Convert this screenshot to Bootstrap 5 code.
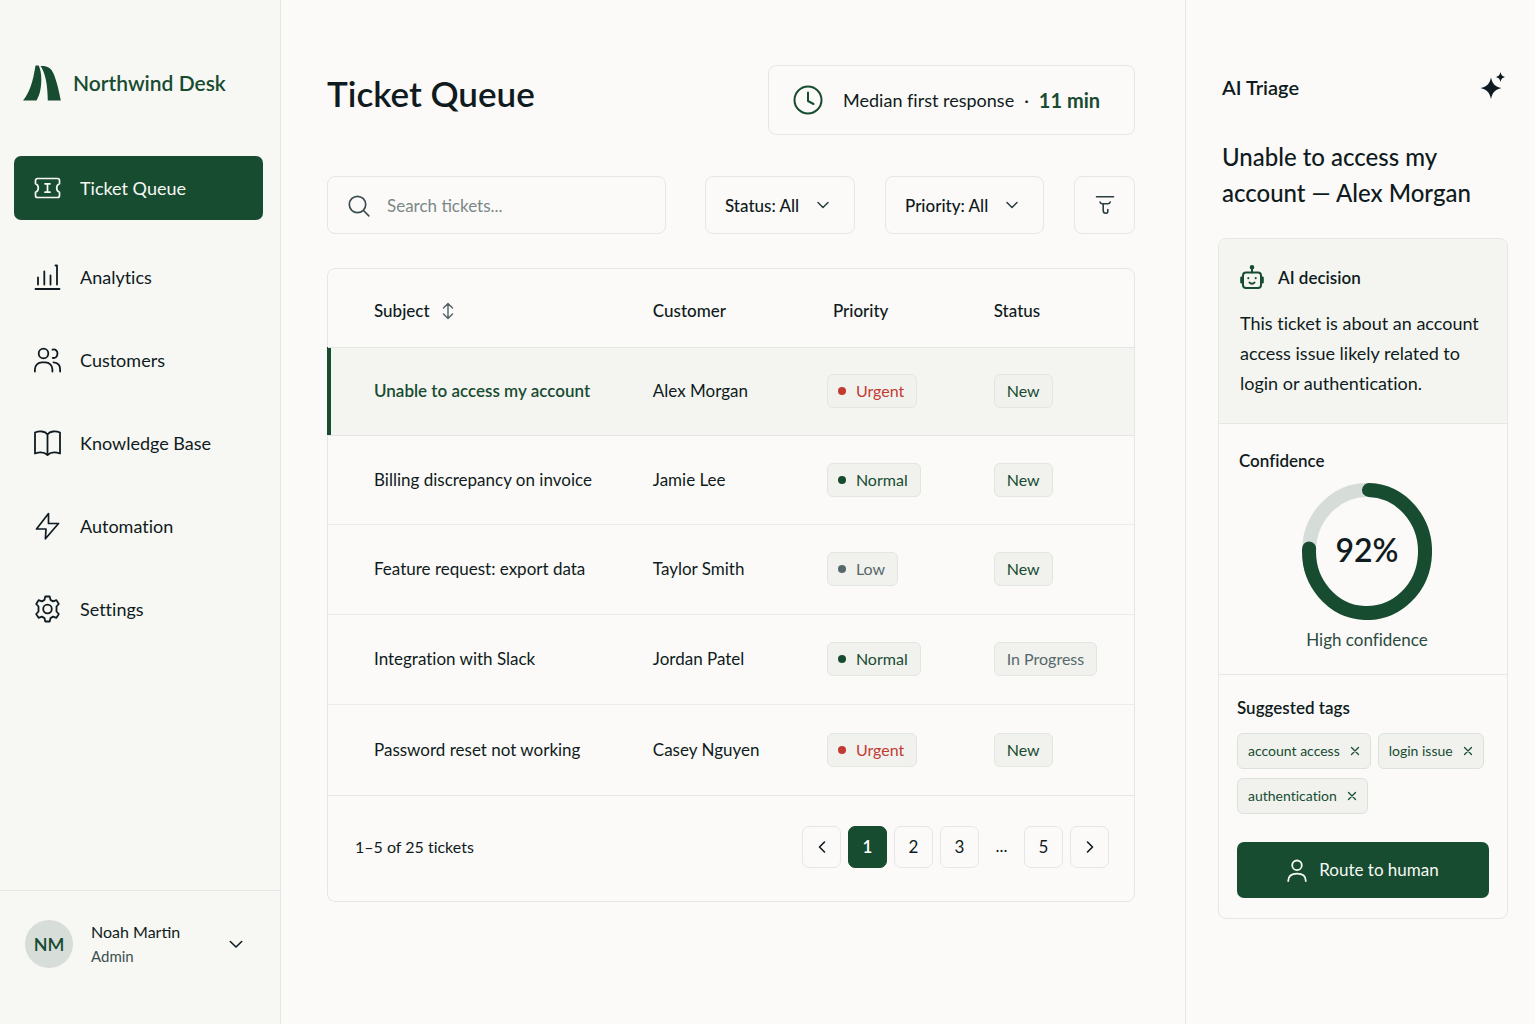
<!DOCTYPE html>
<html lang="en">
<head>
<meta charset="utf-8">
<meta name="viewport" content="width=device-width, initial-scale=1">
<title>Northwind Desk – Ticket Queue</title>
<link href="https://cdn.jsdelivr.net/npm/bootstrap@5.3.0/dist/css/bootstrap.min.css" rel="stylesheet">
<style>
:root{--ink:#0f1b20;--green:#174c31;--line:#e6e7e4;--tint:#f4f5f1;--paper:#fbfaf8;--muted:#4f6163}
body{font-family:Lato,"Liberation Sans",sans-serif;font-size:17px;line-height:24px;font-variant-ligatures:none;color:var(--ink);background:var(--paper)}
svg{display:block;flex:none;fill:none;stroke:currentColor;stroke-linecap:round;stroke-linejoin:round}
.text-green{color:var(--green)}
.side{width:281px;background:#f7f7f4;border-right:1px solid var(--line)}
.brand-link{padding:65px 23px 0;gap:12px;font-size:21px;font-weight:600;color:var(--green)}
.side-nav{padding:55px 17px 0 14px;gap:20px}
.side-nav .nav-link{height:63px;padding:0 20px;gap:19px;font-size:18px;color:var(--ink);border-radius:7px}
.side-nav .nav-link.active{height:64px;margin-bottom:5px;background:var(--green);color:#f7f8f4}
.user-btn{border:0;border-top:1px solid var(--line);background:none;height:134px;padding:0 36px 28px 25px;color:var(--ink)}
.avatar{width:48px;height:48px;margin-right:18px;background:#d7ddd8;font-size:18px;font-weight:600;color:var(--green)}
.user-name{font-size:16px}
.user-role{font-size:15px;color:#3c4f50}
.main-pane{padding:65px 50px 40px 46px}
.page-title{font-size:35px;line-height:56px;font-weight:600}
.boxed{border:1px solid var(--line);border-radius:8px;background:transparent}
.metric{height:70px;padding:0 34px 0 24px;font-size:18px}
.metric-label{margin:0 10px 0 20px}
.metric strong{margin-left:10px;font-size:20px;font-weight:700;color:var(--green)}
.toolbar{margin-top:41px;gap:30px}
.tool{height:58px}
.search-wrap{max-width:339px;padding:2px 20px 0;gap:15px;margin-right:5px;color:#3c4f50}
.search-wrap input{border:0;outline:0;background:none;min-width:0;font-size:17px;color:var(--ink)}
.search-wrap input::placeholder{color:#7b8887;opacity:1}
.select-wrap{display:grid;align-items:center}
.select-wrap>*{grid-area:1/1}
.select-wrap svg{justify-self:end;margin-right:24px;pointer-events:none;color:#2b3d41}
.select-wrap select{appearance:none;padding:2px 54px 0 19px;width:100%;font-weight:500;color:var(--ink)}
.filter-btn{width:61px;padding:0;color:#2b3d41}
.queue{margin-top:34px}
.queue table{table-layout:fixed;width:100%}
.queue th{height:78px;padding:6px 0 0;font-weight:500;border-bottom:1px solid var(--line)}
.queue td{height:90px;padding:0;border-bottom:1px solid #ecece9}
.queue tbody tr:first-child td{height:88px;background:var(--tint);border-color:var(--line)}
.queue tbody tr:nth-child(2) td{height:89px}
.queue tbody tr:last-child td{height:91px;border-color:var(--line)}
.queue th:first-child,.queue td:first-child{padding-left:46px}
.queue tbody tr:first-child td:first-child{box-shadow:inset 3px 0 var(--green),-1px 0 var(--green);font-weight:600;color:var(--green)}
.queue th:nth-child(3){padding-left:6px}
.sort-btn{border:0;background:none;padding:0;gap:12px;font-weight:500;color:inherit}
.pill{display:inline-flex;align-items:center;height:34px;padding:0 12px;font-size:16px;background:#f1f2ee;border:1px solid #e2e6e1;border-radius:6px;color:var(--green)}
.pill-dot{padding-left:10px;gap:10px}
.pill-dot::before{content:"";width:8px;height:8px;border-radius:50%;background:currentColor}
.is-urgent{color:#c23a32}
.is-quiet{color:#56686a}
.queue-foot{height:105px;padding:0 25px 3px 27px}
.queue-count{font-size:16px}
.pager{gap:7px}
.pager .page-link{display:flex;align-items:center;justify-content:center;width:39px;height:42px;padding:0;border:1px solid var(--line);border-radius:7px;background:none;color:var(--ink)}
.pager .active .page-link{background:var(--green);border-color:var(--green);color:#fff;font-weight:600}
.pager .gap-dots{width:31px;text-align:center;line-height:40px}
.triage{width:350px;border-left:1px solid var(--line);padding:71px 27px 40px 32px}
.triage-head{padding:0 2px 0 4px}
.triage-head h2{font-size:20px;line-height:32px;font-weight:600}
.triage h3{font-size:24px;line-height:36px;font-weight:500;margin:36px 0 27px 4px}
.triage h4{font-size:17px;line-height:24px;font-weight:600;margin:0}
.decision{height:184px;padding:26px 16px 0 21px;background:var(--tint);border-radius:8px 8px 0 0}
.decision-head{gap:14px}
.decision p{font-size:18px;line-height:30px;margin:18px 0 0}
.confidence{height:251px;padding:25px 20px 0;border-top:1px solid var(--line)}
.ring{display:grid;place-items:center;margin:10px 0 8px 8px}
.ring>*{grid-area:1/1}
.ring-value{padding-bottom:4px;font-size:32px;line-height:40px;font-weight:600}
.ring-note{margin-left:8px;color:#2b4a3f}
.tags{padding:21px 18px 20px;border-top:1px solid var(--line)}
.tag-list{gap:9px 7px;margin:13px 0 28px}
.tag-chip{display:inline-flex;align-items:center;height:36px;padding:0 10px;gap:10px;font-size:14px;background:#f1f2ee;border:1px solid #dbe2dc;border-radius:6px;color:var(--green)}
.tag-chip button{border:0;background:none;padding:0;color:inherit}
.route-btn{height:56px;gap:12px;border:0;border-radius:7px;background:var(--green);color:#f7f8f4}
</style>
<script src="https://cdn.jsdelivr.net/npm/bootstrap@5.3.0/dist/js/bootstrap.bundle.min.js" defer></script>
</head>
<body>
<div class="d-flex min-vh-100">

  <aside class="side d-flex flex-column flex-shrink-0">
    <a class="brand-link d-flex align-items-center text-decoration-none" href="#">
      <svg width="38" height="36" viewBox="0 0 38 36" style="fill:currentColor;stroke:none"><path d="M12.500 0.500h3.200c1.600 3.500 2.600 8 2.600 13.500 0 9-1.400 16-4.800 21.500H0c6.500-7.500 10-19 12.500-35z"/><path d="M17.500 1c6.500-.4 10.500 1.600 13 7.500 2.800 6.500 5.200 16 7.300 27H24.800C24.600 20 22.500 8 17.500 1z"/></svg>
      <span>Northwind Desk</span>
    </a>
    <nav class="side-nav nav flex-column">
      <a class="nav-link active d-flex align-items-center" aria-current="page" href="#">
        <svg width="27" height="24" viewBox="0 0 27 24" stroke-width="1.700"><path d="M3.500 2.500h20a2 2 0 0 1 2 2v3.300c-1.800.5-2.800 2-2.800 4.200s1 3.700 2.800 4.200v3.300a2 2 0 0 1-2 2h-20a2 2 0 0 1-2-2v-3.300c1.800-.5 2.800-2 2.800-4.200s-1-3.700-2.800-4.200V4.500a2 2 0 0 1 2-2z"/><path d="M11 7.800h5M11 16.200h5M13.500 7.800v8.400"/></svg>
        Ticket Queue</a>
      <a class="nav-link d-flex align-items-center" href="#">
        <svg width="27" height="28" viewBox="0 0 27 28" stroke-width="1.800"><path d="M1.500 26h24M4 21.500v-7M10.300 21.500v-13M16.500 21.500v-9M23 21.500v-19h-1.500"/></svg>
        Analytics</a>
      <a class="nav-link d-flex align-items-center" href="#">
        <svg width="27" height="28" viewBox="0 0 27 28" stroke-width="1.800"><circle cx="9.500" cy="7.500" r="4.800"/><path d="M.9 25.500v-2.200a7 7 0 0 1 7-7h3.500a7 7 0 0 1 7 7v2.200M18.500 3.700c2.800-1 5 1 5 3.900s-2.200 5-4.800 4.200M19.500 16.400c4 .2 6.600 2.600 6.600 6.900v2.200"/></svg>
        Customers</a>
      <a class="nav-link d-flex align-items-center" href="#">
        <svg width="27" height="28" viewBox="0 0 27 28" stroke-width="1.800"><path d="M13.500 5.500C11 2 5.500 1.700 1 3.500v21c4.500-1.700 9.500-1.400 12.500 1.500 3-2.900 8-3.200 12.500-1.500v-21c-4.500-1.800-10-1.500-12.500 2zM13.500 5.500V26"/></svg>
        Knowledge Base</a>
      <a class="nav-link d-flex align-items-center" href="#">
        <svg width="27" height="28" viewBox="0 0 27 28" stroke-width="1.700"><path d="M14.500 1.500L2.500 17h9.500l-.6 9.800L24.500 11.500H14.500z"/></svg>
        Automation</a>
      <a class="nav-link d-flex align-items-center" href="#">
        <svg width="27" height="28" viewBox="0 0 27 28" stroke-width="1.800"><circle cx="13.500" cy="14" r="4.300"/><path d="M11.300 1.500h4.400l.8 3.400 2.600 1.500 3.300-1.300 2.400 3.900-2.300 2.500v5l2.300 2.500-2.400 3.900-3.300-1.300-2.600 1.500-.8 3.400h-4.400l-.8-3.400-2.600-1.500-3.300 1.300L2.200 19l2.300-2.500v-5L2.200 9l2.400-3.900 3.300 1.300 2.600-1.500z"/></svg>
        Settings</a>
    </nav>
    <button class="user-btn mt-auto d-flex align-items-center text-start" type="button">
      <span class="avatar rounded-circle d-flex align-items-center justify-content-center flex-shrink-0">NM</span>
      <span class="flex-grow-1"><span class="user-name d-block">Noah Martin</span><span class="user-role d-block">Admin</span></span>
      <svg width="16" height="16" viewBox="0 0 16 16" stroke-width="1.600"><path d="M2.300 5.500L8 11l5.700-5.500"/></svg>
    </button>
  </aside>

  <main class="main-pane flex-grow-1">
    <header class="d-flex justify-content-between align-items-start">
      <h1 class="page-title mb-0">Ticket Queue</h1>
      <div class="boxed metric d-flex align-items-center">
        <svg class="text-green" width="30" height="30" viewBox="0 0 30 30" stroke-width="2"><circle cx="15" cy="15" r="13.500"/><path d="M15 7.500V16l5.500 3"/></svg>
        <span class="metric-label">Median first response</span><span>·</span><strong>11 min</strong>
      </div>
    </header>

    <form class="toolbar d-flex" role="search">
      <label class="boxed tool search-wrap d-flex align-items-center flex-grow-1">
        <svg width="22" height="22" viewBox="0 0 22 22" stroke-width="1.700"><circle cx="9.500" cy="9.500" r="8.200"/><path d="M15.500 15.500l5.300 5.300"/></svg>
        <input class="flex-grow-1" type="search" placeholder="Search tickets..." aria-label="Search tickets">
      </label>
      <div class="select-wrap ms-auto">
        <select class="boxed tool" aria-label="Status"><option>Status: All</option></select>
        <svg width="16" height="16" viewBox="0 0 16 16" stroke-width="1.500"><path d="M3 5.500l5 5 5-5"/></svg>
      </div>
      <div class="select-wrap">
        <select class="boxed tool" aria-label="Priority"><option>Priority: All</option></select>
        <svg width="16" height="16" viewBox="0 0 16 16" stroke-width="1.500"><path d="M3 5.500l5 5 5-5"/></svg>
      </div>
      <button class="boxed tool filter-btn d-flex align-items-center justify-content-center" type="button" aria-label="Filter">
        <svg width="20" height="22" viewBox="0 0 20 22" stroke-width="1.600"><path d="M1.500 2.800h17M5 8c.5 1.500 1 1.800 2.200 1.800h5.600c1.200 0 2-.3 2.400-1.800M8.200 10v6.500c0 1.800.5 2.700 2.600 2.700 1.600 0 2-.5 2-1.700v-2"/></svg>
      </button>
    </form>

    <section class="boxed queue">
      <table>
        <colgroup><col style="width:40.300%"><col style="width:21.600%"><col style="width:20.700%"><col></colgroup>
        <thead>
          <tr>
            <th scope="col"><button class="sort-btn d-flex align-items-center" type="button">Subject
              <svg width="12" height="18" viewBox="0 0 12 18" stroke-width="1.400" color="#4f6163"><path d="M6 2v14M1.500 6L6 1.500 10.500 6M1.500 12L6 16.500l4.500-4.500"/></svg></button></th>
            <th scope="col">Customer</th><th scope="col">Priority</th><th scope="col">Status</th>
          </tr>
        </thead>
        <tbody>
          <tr><td>Unable to access my account</td><td>Alex Morgan</td><td><span class="pill pill-dot is-urgent">Urgent</span></td><td><span class="pill">New</span></td></tr>
          <tr><td>Billing discrepancy on invoice</td><td>Jamie Lee</td><td><span class="pill pill-dot">Normal</span></td><td><span class="pill">New</span></td></tr>
          <tr><td>Feature request: export data</td><td>Taylor Smith</td><td><span class="pill pill-dot is-quiet">Low</span></td><td><span class="pill">New</span></td></tr>
          <tr><td>Integration with Slack</td><td>Jordan Patel</td><td><span class="pill pill-dot">Normal</span></td><td><span class="pill is-quiet">In Progress</span></td></tr>
          <tr><td>Password reset not working</td><td>Casey Nguyen</td><td><span class="pill pill-dot is-urgent">Urgent</span></td><td><span class="pill">New</span></td></tr>
        </tbody>
      </table>
      <div class="queue-foot d-flex align-items-center justify-content-between">
        <span class="queue-count">1–5 of 25 tickets</span>
        <nav aria-label="Ticket pages">
          <ul class="pager list-unstyled d-flex mb-0">
            <li><a class="page-link" href="#" aria-label="Previous"><svg width="16" height="16" viewBox="0 0 16 16" stroke-width="1.600"><path d="M10.500 3L5.500 8l5 5"/></svg></a></li>
            <li class="active"><a class="page-link" href="#" aria-current="page">1</a></li>
            <li><a class="page-link" href="#">2</a></li>
            <li><a class="page-link" href="#">3</a></li>
            <li class="gap-dots">...</li>
            <li><a class="page-link" href="#">5</a></li>
            <li><a class="page-link" href="#" aria-label="Next"><svg width="16" height="16" viewBox="0 0 16 16" stroke-width="1.600"><path d="M5.500 3l5 5-5 5"/></svg></a></li>
          </ul>
        </nav>
      </div>
    </section>
  </main>

  <aside class="triage flex-shrink-0">
    <div class="triage-head d-flex justify-content-between align-items-center">
      <h2 class="mb-0">AI Triage</h2>
      <svg width="26" height="32" viewBox="0 0 26 32" style="fill:currentColor;stroke:none"><path d="M11 6.500c1.500 6.500 3.900 9 10.500 10.500C14.900 18.500 12.500 21.500 11 28 9.500 21.500 7.100 18.500.5 17 7.100 15.500 9.500 13 11 6.500z"/><path d="M20.500 1c.8 3.200 1.800 4.200 4.800 5-3 .8-4 1.800-4.800 5-.8-3.200-1.800-4.200-4.800-5 3-.8 4-1.800 4.800-5z"/></svg>
    </div>
    <h3>Unable to access my account — Alex Morgan</h3>
    <section class="boxed">
      <div class="decision">
        <div class="decision-head d-flex align-items-center">
          <svg class="text-green" width="24" height="25" viewBox="0 0 24 25" stroke-width="2"><rect x="3" y="7.500" width="18" height="15.500" rx="3"/><path d="M12 7.500V3M3 12.500H1.200v5H3M21 12.500h1.800v5H21M9.500 17.500c1.200 1.600 3.800 1.600 5 0" /><circle cx="12" cy="2.300" r="1.300" fill="currentColor"/><path d="M8.300 13v.3M15.700 13v.3"/></svg>
          <h4>AI decision</h4>
        </div>
        <p>This ticket is about an account access issue likely related to login or authentication.</p>
      </div>
      <div class="confidence">
        <h4>Confidence</h4>
        <div class="ring">
          <svg width="130" height="137" viewBox="0 0 130 137" stroke-width="14"><ellipse cx="65" cy="68.500" rx="58" ry="61.500" stroke="#d6ddd8"/><path d="M67 7.100A58 61.500 0 1 1 7.100 65.500" stroke="#174c31"/></svg>
          <span class="ring-value">92%</span>
        </div>
        <div class="ring-note text-center">High confidence</div>
      </div>
      <div class="tags">
        <h4>Suggested tags</h4>
        <div class="tag-list d-flex flex-wrap">
          <span class="tag-chip">account access<button type="button" aria-label="Remove account access"><svg width="10" height="10" viewBox="0 0 10 10" stroke-width="1.300"><path d="M1.500 1.500l7 7M8.500 1.500l-7 7"/></svg></button></span>
          <span class="tag-chip">login issue<button type="button" aria-label="Remove login issue"><svg width="10" height="10" viewBox="0 0 10 10" stroke-width="1.300"><path d="M1.500 1.500l7 7M8.500 1.500l-7 7"/></svg></button></span>
          <span class="tag-chip">authentication<button type="button" aria-label="Remove authentication"><svg width="10" height="10" viewBox="0 0 10 10" stroke-width="1.300"><path d="M1.500 1.500l7 7M8.500 1.500l-7 7"/></svg></button></span>
        </div>
        <button class="route-btn w-100 d-flex align-items-center justify-content-center" type="button">
          <svg width="20" height="23" viewBox="0 0 20 23" stroke-width="1.800"><circle cx="10" cy="6.300" r="4.800"/><path d="M1.200 22c0-5 3-7.300 8.800-7.300s8.800 2.300 8.800 7.300"/></svg>
          Route to human
        </button>
      </div>
    </section>
  </aside>
</div>
</body>
</html>
